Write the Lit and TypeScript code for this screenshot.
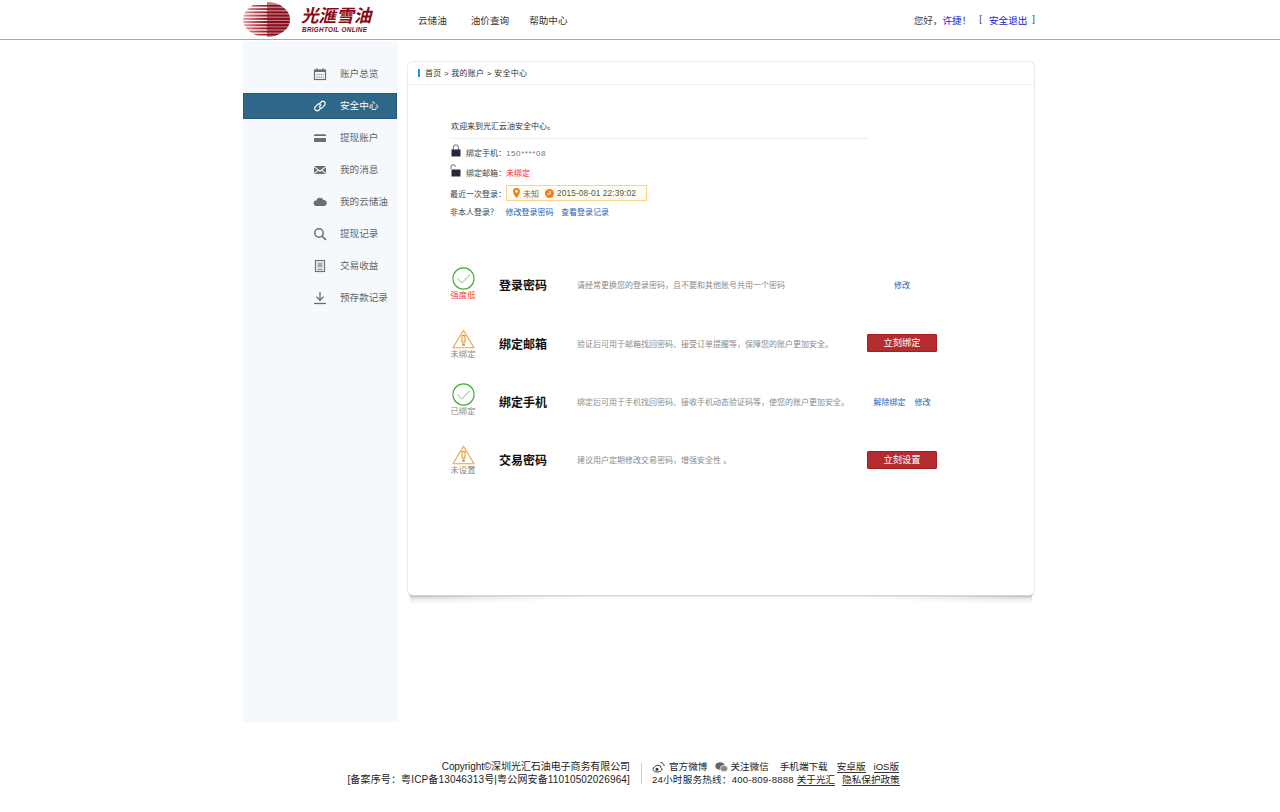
import { LitElement, html, css, svg } from "lit";
import { customElement } from "lit/decorators.js";

const stripes = [
  [3, 1.6], [6.2, 1.7], [9.4, 1.9], [12.6, 2], [15.8, 2.1], [19, 2.1], [22.2, 2.1], [25.4, 2], [28.6, 1.9], [31.8, 1.7],
];

const navIcons: Record<string, unknown> = {
  calendar: svg`<rect x="1.5" y="3" width="11" height="9.5" fill="none" stroke="currentColor" stroke-width="1.2"/><rect x="1.5" y="3" width="11" height="2" fill="currentColor"/><path d="M4 1.2V3.5M10 1.2V3.5" stroke="currentColor" stroke-width="1.2"/><path d="M3.5 7.5h7M3.5 10h7" stroke="currentColor" stroke-width="1.2" stroke-dasharray="1.2 .9"/>`,
  link: svg`<path d="M5.9 8.1l2.4-2.4M6.6 4.5l1.5-1.5a2.4 2.4 0 0 1 3.4 3.4L9.6 8.3a2.4 2.4 0 0 1-3 .3M7.5 9.5L5.9 11a2.4 2.4 0 0 1-3.4-3.4l1.9-1.9a2.4 2.4 0 0 1 3-.3" fill="none" stroke="currentColor" stroke-width="1.2"/>`,
  card: svg`<path d="M1 4.2a1 1 0 0 1 1-1h10a1 1 0 0 1 1 1v.8H1zM1 7h12v3a1 1 0 0 1-1 1H2a1 1 0 0 1-1-1z" fill="currentColor"/>`,
  mail: svg`<path d="M1 3h12L7 7.5zM1 4.3l3.6 2.8L1 10.3zM13 4.3L9.4 7.1l3.6 3.2zM1.5 11l3.9-3.3L7 9l1.6-1.3 3.9 3.3z" fill="currentColor"/>`,
  cloud: svg`<path d="M3.5 11a2.7 2.7 0 0 1-.4-5.4A3.9 3.9 0 0 1 10.4 5a3 3 0 0 1 .6 6z" fill="currentColor"/>`,
  search: svg`<circle cx="6" cy="6" r="4.2" fill="none" stroke="currentColor" stroke-width="1.5"/><path d="M9 9l4 4" stroke="currentColor" stroke-width="1.7"/>`,
  doc: svg`<rect x="2.5" y="1.5" width="9" height="11" fill="none" stroke="currentColor" stroke-width="1.2"/><rect x="4.5" y="3.5" width="5" height="5" fill="#aaa"/><path d="M4.5 10.3h5" stroke="currentColor"/>`,
  download: svg`<path d="M7 1v8M3.4 5.8L7 9.4l3.6-3.6" fill="none" stroke="currentColor" stroke-width="1.3"/><path d="M1 12.5h12" stroke="currentColor" stroke-width="1.3"/>`,
};

const navItems = [
  ["calendar", "账户总览"], ["link", "安全中心"], ["card", "提现账户"], ["mail", "我的消息"],
  ["cloud", "我的云储油"], ["search", "提现记录"], ["doc", "交易收益"], ["download", "预存款记录"],
];

const okIcon = html`<svg class="st-icon" viewBox="0 0 23 23"><circle cx="11.5" cy="11.5" r="10.6" fill="none" stroke="#3fae3f" stroke-width="1.1"/><path d="M5.5 11.5l4.5 4.5 8-8.5" fill="none" stroke="#a9d9a9" stroke-width="1.1"/></svg>`;
const warnIcon = html`<svg class="st-icon warn" viewBox="0 0 23 20"><path d="M11.5 1.2L22 18.8H1z" fill="none" stroke="#f5a03a" stroke-width="1.1" stroke-linejoin="round"/><rect x="10" y="6.5" width="3" height="6.5" fill="none" stroke="#e8891f" stroke-width="1"/><rect x="10.2" y="14.5" width="2.6" height="2.2" fill="#e8891f"/></svg>`;

const rows = [
  { ok: true, st: "强度低", red: true, title: "登录密码", desc: "请经常更换您的登录密码，且不要和其他账号共用一个密码", links: ["修改"] },
  { ok: false, st: "未绑定", title: "绑定邮箱", desc: "验证后可用于邮箱找回密码、接受订单提醒等，保障您的账户更加安全。", btn: "立刻绑定" },
  { ok: true, st: "已绑定", title: "绑定手机", desc: "绑定后可用于手机找回密码、接收手机动态验证码等，使您的账户更加安全。", links: ["解除绑定", "修改"] },
  { ok: false, st: "未设置", title: "交易密码", desc: "建议用户定期修改交易密码，增强安全性 。", btn: "立刻设置" },
];

const lock = (open: boolean) => html`<svg class="lock" viewBox="0 0 12 13"><path d="${open ? "M1 5V3.5A2.2 2.2 0 0 1 5.5 2.6" : "M3.2 6V3.4a2.6 2.6 0 0 1 5.2 0V6"}" fill="none" stroke="#666" stroke-width="1"/><rect x="1.5" y="5.5" width="9" height="7" fill="#262b3c"/></svg>`;

@customElement("app-root")
export class AppRoot extends LitElement {
  static styles = css`
    :host {
      display: block;
      height: 812px;
      background: #fff;
      color: #333;
      font-family: "Liberation Sans", "Noto Sans CJK SC", sans-serif;
      font-size: 8px;
      overflow: hidden;
    }
    a { color: inherit; text-decoration: none; }
    .header { height: 39px; border-bottom: 1px solid #a9a9a9; }
    .container { width: 794px; margin-left: 243px; }
    .head-in { display: flex; align-items: center; height: 39px; }
    .logo { width: 175px; display: flex; gap: 11px; align-items: center; height: 39px; flex: none; }
    .logo svg { width: 47px; height: 37px; flex: none; }
    .logo-text { display: flex; flex-direction: column; padding-top: 1px; }
    .logo-cn { font-size: 17.6px; line-height: 20px; font-weight: 700; font-style: italic; color: #8a0a16; white-space: nowrap; }
    .logo-en { font-size: 6.4px; line-height: 8px; font-weight: 700; font-style: italic; color: #7d0d17; letter-spacing: .28px; margin-left: 1px; white-space: nowrap; }
    .nav { display: flex; font-size: 9.6px; gap: 20px; color: #333; }
    .nav a:first-child { margin-right: 4px; }
    .user { margin-left: auto; margin-right: 2px; display: flex; font-size: 9.6px; color: #444; white-space: nowrap; }
    .user .blue { color: #1a1ac8; }
    .user .br1 { margin-left: 8px; margin-right: 7px; }
    .user .br2 { margin-left: 5px; }
    .main { display: flex; height: 682px; }
    .side { width: 155px; margin-top: 1px; height: 681px; background: #f5f8fd; padding-top: 20px; box-sizing: border-box; display: flex; flex-direction: column; gap: 6px; flex: none; }
    .item { height: 26px; width: 154px; display: flex; align-items: center; padding-left: 70px; box-sizing: border-box; gap: 13px; font-size: 9.6px; color: #666; white-space: nowrap; }
    .item span { margin: -1px 0 1px; }
    .item svg { width: 14px; height: 14px; flex: none; color: #6e6e6e; }
    .item.on { background: #2f6789; color: #fff; box-shadow: inset 0 0 0 1px #28597a; }
    .item.on svg { color: #fff; }
    .card-wrap { position: relative; z-index: 0; width: 628px; height: 535px; margin: 21px 0 0 9px; flex: none; }
    .card-wrap::before, .card-wrap::after { content: ""; position: absolute; z-index: -1; bottom: -8px; width: 30%; height: 9px; }
    .card-wrap::before { left: 3px; background: radial-gradient(ellipse 100% 100% at 0 0, rgba(0,0,0,.24), rgba(0,0,0,.08) 45%, transparent 100%); }
    .card-wrap::after { right: 3px; background: radial-gradient(ellipse 100% 100% at 100% 0, rgba(0,0,0,.24), rgba(0,0,0,.08) 45%, transparent 100%); }
    .card { height: 100%; box-sizing: border-box; background: #fff; border: 1px solid #ececec; border-bottom-color: #d6d6d6; border-radius: 6px; box-shadow: 0 1px 1px rgba(0,0,0,.08); }
    .crumb { height: 23px; box-sizing: border-box; padding-bottom: 1px; border-bottom: 1px solid #f2f2f2; display: flex; align-items: center; padding-left: 10px; gap: 5px; color: #333; white-space: nowrap; letter-spacing: .25px; }
    .crumb i { width: 2px; height: 8px; background: #0a9be8; }
    .intro { padding: 33px 0 0 42px; }
    .welcome { width: 418px; line-height: 16px; box-sizing: border-box; border-bottom: 1px solid #eee; padding: 1px 0 0 1px; height: 21px; margin-bottom: 3px; color: #333; }
    .bind { height: 20px; display: flex; align-items: center; padding-left: 1px; color: #444; gap: 4px; white-space: nowrap; }
    .lock { width: 12px; height: 13px; flex: none; margin: -3px 0 0 -1px; }
    .gray { color: #777; letter-spacing: .6px; }
    .red { color: #f22; }
    .last { display: flex; align-items: center; height: 16px; margin-top: 3px; color: #444; white-space: nowrap; }
    .last-box { width: 141px; height: 16px; box-sizing: border-box; background: #fffdf2; border: 1px solid #fbd38c; display: flex; align-items: center; padding-left: 6px; color: #666; }
    .pin { width: 7px; height: 10px; margin-right: 3px; }
    .clock { width: 9px; height: 9px; margin: 0 3px 0 6px; }
    .time { font-size: 8.3px; letter-spacing: .1px; color: #555; }
    .notme { display: flex; height: 16px; align-items: center; margin-top: 2px; color: #444; white-space: nowrap; gap: 7.5px; }
    .link { color: #1a66b8; }
    .rows { margin-top: 36.5px; padding-left: 40px; }
    .row { height: 58.4px; display: grid; grid-template-columns: 51px 78px 290px 70px; align-items: center; }
    .st { width: 30px; display: flex; flex-direction: column; align-items: center; color: #888; line-height: 11px; font-size: 8.3px; white-space: nowrap; }
    .st.r { color: #f33; }
    .st.good { margin-top: -2px; }
    .st-icon { width: 23px; height: 23px; display: block; }
    .st-icon.warn { height: 20px; margin-top: 2px; margin-bottom: 0; }
    .title { font-size: 12px; font-weight: 700; color: #111; white-space: nowrap; }
    .desc { color: #8a8a8a; white-space: nowrap; }
    .act { display: flex; justify-content: center; gap: 9px; white-space: nowrap; }
    .btn { width: 70px; height: 18px; line-height: 16px; box-sizing: border-box; background: #b32c30; border: 1px solid #a51e22; border-radius: 1px; color: #fff; text-align: center; font-size: 9.3px; }
    .footer { display: flex; margin-top: 38px; color: #222; font-size: 10px; line-height: 13px; }
    .f-left { width: 387px; text-align: right; white-space: nowrap; }
    .f-tight { letter-spacing: -.08px; }
    .f-wide { letter-spacing: .15px; }
    .f-sep { width: 1px; height: 21px; background: #ccc; margin: 3px 10px 0 11px; flex: none; }
    .f-right { width: 252px; font-size: 9.6px; white-space: nowrap; }
    .f-line { display: flex; align-items: center; height: 13px; }
    .f-line svg { width: 13px; height: 12px; flex: none; margin-right: 4px; }
    .f-line svg.we { margin-left: 8px; margin-right: 2px; }
    .f-hot { letter-spacing: .2px; }
    .u { border-bottom: 1px solid #333; line-height: 11px; }
    .m2 { margin-left: 11px; }
    .m3 { margin-left: 9px; }
    .m4 { margin-left: 8px; }
    .m5 { margin-left: 3px; }
    .m6 { margin-left: 7px; }
  `;

  render() {
    return html`
      <div class="header">
        <div class="container head-in">
          <div class="logo">
            <svg viewBox="0 0 47 37">
              <defs>
                <clipPath id="lc"><ellipse cx="23.5" cy="18.5" rx="23.5" ry="17.5"/></clipPath>
                <linearGradient id="lg" x1="0" x2="1" y1="0" y2="0">
                  <stop offset="0" stop-color="#e8a0a8"/><stop offset=".3" stop-color="#b8404c"/><stop offset=".55" stop-color="#8c0f1c"/><stop offset="1" stop-color="#7d0a15"/>
                </linearGradient>
              </defs>
              <g clip-path="url(#lc)">
                ${stripes.map(([y, h]) => svg`<rect x="0" y="${y + 1}" width="47" height="${h}" fill="url(#lg)"/>`)}
                <rect x="24" y="1" width="23" height="35" fill="#8c0f1c" opacity=".55"/>
              </g>
            </svg>
            <div class="logo-text">
              <div class="logo-cn">光滙雪油</div>
              <div class="logo-en">BRIGHTOIL ONLINE</div>
            </div>
          </div>
          <div class="nav"><a>云储油</a><a>油价查询</a><a>帮助中心</a></div>
          <div class="user">您好，<span class="blue">许捷</span>！<span class="br1">[</span><span class="blue">安全退出</span><span class="br2">]</span></div>
        </div>
      </div>
      <div class="container main">
        <div class="side">
          ${navItems.map(([ic, label], i) => html`<div class="item ${i === 1 ? "on" : ""}"><svg viewBox="0 0 14 14">${navIcons[ic]}</svg><span>${label}</span></div>`)}
        </div>
        <div class="card-wrap">
          <div class="card">
            <div class="crumb"><i></i><span>首页 &gt; 我的账户 &gt; 安全中心</span></div>
            <div class="intro">
              <div class="welcome">欢迎来到光汇云油安全中心。</div>
              <div class="bind">${lock(false)}<span>绑定手机：<span class="gray">150****08</span></span></div>
              <div class="bind">${lock(true)}<span>绑定邮箱：<span class="red">未绑定</span></span></div>
              <div class="last">
                <span>最近一次登录：</span>
                <div class="last-box">
                  <svg class="pin" viewBox="0 0 7 10"><path d="M3.5 0a3.4 3.4 0 0 0-3.4 3.4C.1 5.8 3.5 10 3.5 10s3.4-4.2 3.4-6.6A3.4 3.4 0 0 0 3.5 0z" fill="#f07d1a"/><circle cx="3.5" cy="3.4" r="1.3" fill="#fff"/></svg>
                  <span>未知</span>
                  <svg class="clock" viewBox="0 0 9 9"><circle cx="4.5" cy="4.5" r="4.5" fill="#f07d1a"/><path d="M5 2v3H2.5" fill="none" stroke="#fff" stroke-width="1"/></svg>
                  <span class="time">2015-08-01 22:39:02</span>
                </div>
              </div>
              <div class="notme"><span>非本人登录？</span><a class="link">修改登录密码</a><a class="link">查看登录记录</a></div>
            </div>
            <div class="rows">
              ${rows.map((r) => html`
                <div class="row">
                  <div class="st ${r.red ? "r" : ""} ${r.ok ? "good" : ""}">${r.ok ? okIcon : warnIcon}<span>${r.st}</span></div>
                  <div class="title">${r.title}</div>
                  <div class="desc">${r.desc}</div>
                  <div class="act">
                    ${r.btn ? html`<a class="btn">${r.btn}</a>` : r.links!.map((l) => html`<a class="link">${l}</a>`)}
                  </div>
                </div>`)}
            </div>
          </div>
        </div>
      </div>
      <div class="container footer">
        <div class="f-left">
          <div class="f-tight">Copyright©深圳光汇石油电子商务有限公司</div>
          <div class="f-wide">[备案序号：粤ICP备13046313号|粤公网安备11010502026964]</div>
        </div>
        <div class="f-sep"></div>
        <div class="f-right">
          <div class="f-line">
            <svg viewBox="0 0 13 12"><path d="M5.5 4.2C3 5 1 6.8 1 8.4 1 10 3 11 5.4 11s4.6-1.3 4.6-3c0-1-1-1.4-1.5-1.6.4-1 .2-2-1.4-1.6z" fill="none" stroke="#333"/><circle cx="5" cy="8.2" r="1.5" fill="#333"/><path d="M8.5 1.5a3.4 3.4 0 0 1 3.6 3.6" fill="none" stroke="#333"/></svg>
            <span>官方微博</span>
            <svg class="we" viewBox="0 0 13 12"><ellipse cx="5" cy="5" rx="4.7" ry="3.8" fill="#666"/><ellipse cx="9" cy="7.6" rx="3.8" ry="3.2" fill="#888" stroke="#fff" stroke-width=".7"/></svg>
            <span>关注微信</span>
            <span class="m2">手机端下载</span>
            <span class="u m3">安卓版</span>
            <span class="u m4">iOS版</span>
          </div>
          <div class="f-line">
            <span class="f-hot">24小时服务热线：400-809-8888</span>
            <span class="u m5">关于光汇</span>
            <span class="u m6">隐私保护政策</span>
          </div>
        </div>
      </div>
    `;
  }
}
